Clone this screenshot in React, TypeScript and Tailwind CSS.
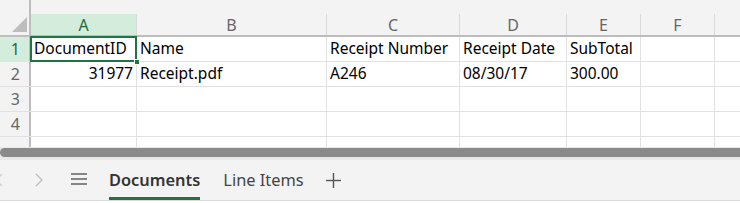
import React from "react";

const cols = [
  { l: "A", w: 106 },
  { l: "B", w: 190 },
  { l: "C", w: 133 },
  { l: "D", w: 107 },
  { l: "E", w: 74 },
  { l: "F", w: 74 },
];

const rows: { n: number; cells: (string | { t: string; r?: boolean })[] }[] = [
  { n: 1, cells: ["DocumentID", "Name", "Receipt Number", "Receipt Date", "SubTotal", ""] },
  { n: 2, cells: [{ t: "31977", r: true }, "Receipt.pdf", "A246", "08/30/17", "300.00", ""] },
  { n: 3, cells: ["", "", "", "", "", ""] },
  { n: 4, cells: ["", "", "", "", "", ""] },
];

export default function App() {
  return (
    <div className="w-[740px] h-[203px] overflow-hidden bg-white flex flex-col" style={{ fontFamily: '"Noto Sans", sans-serif' }}>
      {/* top strip */}
      <div className="h-[14px] bg-[#f3f3f3] flex shrink-0">
        <div className="w-[31px] border-r-2 border-[#bdbdbd] shrink-0" />
      </div>
      {/* column header */}
      <div className="h-[23px] flex shrink-0 bg-[#f3f3f3] border-b-2 border-[#bdbdbd]">
        <div className="w-[31px] shrink-0 border-r-2 border-[#bdbdbd] relative">
          <svg className="absolute left-[12px] top-[3px]" width="15" height="15" viewBox="0 0 15 15">
            <polygon points="15,0 15,15 0,15" fill="#bdbdbd" />
          </svg>
        </div>
        {cols.map((c, i) => (
          <div
            key={c.l}
            style={{ width: c.w }}
            className={`shrink-0 flex items-center justify-center text-[16px] border-r border-[#dadada] ${i === 0 ? "bg-[#d3ecdc] text-[#1e6b40]" : "text-[#666666]"}`}
          >
            {c.l}
          </div>
        ))}
        <div className="flex-1" />
      </div>
      {/* rows */}
      {rows.map((row) => (
        <div key={row.n} className="h-[25px] flex shrink-0 border-b border-[#e1e1e1]">
          <div
            className={`w-[31px] shrink-0 border-r-2 border-[#bdbdbd] flex items-center justify-end pr-[9px] text-[16px] ${row.n === 1 ? "bg-[#d3ecdc] text-[#1e6b40]" : "bg-[#f3f3f3] text-[#666666]"}`}
          >
            {row.n}
          </div>
          {cols.map((c, i) => {
            const cell = row.cells[i];
            const t = typeof cell === "string" ? cell : cell.t;
            const r = typeof cell === "string" ? false : !!cell.r;
            const sel = row.n === 1 && i === 0;
            return (
              <div
                key={c.l}
                style={{ width: c.w }}
                className={`shrink-0 relative flex items-center text-[15.5px] text-black px-[3px] border-r border-[#e1e1e1] whitespace-nowrap ${r ? "justify-end" : ""}`}
              >
                {t}
                {sel && (
                  <>
                    <div className="absolute left-[-1px] top-[-1px] right-[-1px] bottom-[-1px] border-2 border-[#217346]" />
                    <div className="absolute right-[-4px] bottom-[-4px] w-[6px] h-[6px] bg-[#217346] border border-white z-10" />
                  </>
                )}
              </div>
            );
          })}
          <div className="flex-1" />
        </div>
      ))}
      {/* partial row 5 */}
      <div className="h-[10px] flex shrink-0">
        <div className="w-[31px] shrink-0 border-r-2 border-[#bdbdbd] bg-[#f3f3f3]" />
        {cols.map((c) => (
          <div key={c.l} style={{ width: c.w }} className="shrink-0 border-r border-[#e1e1e1]" />
        ))}
        <div className="flex-1" />
      </div>
      {/* scrollbar */}
      <div className="h-[13px] bg-[#e8e8e8] pt-[1px] shrink-0">
        <div className="h-[9px] w-full bg-[#8a8a8a] rounded-l-full" />
      </div>
      {/* tab bar */}
      <div className="h-[41px] bg-[#f3f3f3] flex items-center shrink-0 border-b border-[#d9d9d9] relative">
        <svg className="absolute left-[-5px] top-[13px]" width="9" height="14" viewBox="0 0 9 14">
          <polyline points="7,1 1,7 7,13" fill="none" stroke="#cfcfcf" strokeWidth="1.3" />
        </svg>
        <svg className="absolute left-[35px] top-[13px]" width="9" height="14" viewBox="0 0 9 14">
          <polyline points="1,1 7,7 1,13" fill="none" stroke="#bdbdbd" strokeWidth="1.3" />
        </svg>
        <svg className="absolute left-[71px] top-[12px]" width="16" height="14" viewBox="0 0 16 14">
          <line x1="0" y1="2" x2="16" y2="2" stroke="#555" strokeWidth="1.4" />
          <line x1="0" y1="7" x2="16" y2="7" stroke="#555" strokeWidth="1.4" />
          <line x1="0" y1="12" x2="16" y2="12" stroke="#555" strokeWidth="1.4" />
        </svg>
        <div className="ml-[109px] h-full flex items-center relative">
          <span className="text-[16.4px] font-semibold text-[#333333]">Documents</span>
          <div className="absolute left-0 right-0 bottom-0 h-[3px] bg-[#217346]" />
        </div>
        <span className="ml-[23px] text-[16.4px] text-[#444444]">Line Items</span>
        <svg className="ml-[22px]" width="15" height="15" viewBox="0 0 15 15">
          <line x1="7.5" y1="0" x2="7.5" y2="15" stroke="#555" strokeWidth="1.4" />
          <line x1="0" y1="7.5" x2="15" y2="7.5" stroke="#555" strokeWidth="1.4" />
        </svg>
      </div>
      <div className="flex-1 bg-white" />
    </div>
  );
}
